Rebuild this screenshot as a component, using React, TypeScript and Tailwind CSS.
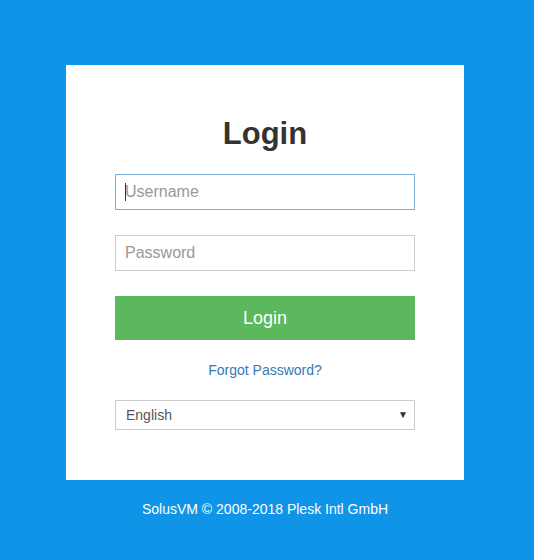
import React from 'react';

const font = { fontFamily: '"Liberation Sans", Arial, sans-serif' };

export default function App() {
  return (
    <div
      className="min-h-[560px] w-full bg-[#0f94e7] flex flex-col items-center pt-[65px] pr-[4px]"
      style={font}
    >
      <div className="w-[398px] bg-white px-[49px] pt-[51px] pb-[50px] flex flex-col">
        <h1 className="text-center text-[31px] leading-[36px] font-bold text-[#333]">
          Login
        </h1>

        <div className="relative mt-[22px]">
          <input
            type="text"
            placeholder="Username"
            className="w-full h-[36px] border border-[#7fb1d8] px-[9px] text-[16px] text-[#555] placeholder:text-[#999] outline-none"
          />
          <span className="absolute left-[10px] top-[9px] h-[18px] w-px bg-[#333]" />
        </div>

        <input
          type="password"
          placeholder="Password"
          className="mt-[25px] w-full h-[36px] border border-[#ccc] px-[9px] text-[16px] text-[#555] placeholder:text-[#999] outline-none"
        />

        <button className="mt-[25px] h-[44px] w-full bg-[#5cb85c] text-white text-[18px]">
          Login
        </button>

        <a className="mt-[20px] text-center text-[14px] leading-[20px] text-[#337ab7]">
          Forgot Password?
        </a>

        <div className="relative mt-[20px]">
          <select className="w-full h-[30px] appearance-none border border-[#ccc] bg-white pl-[10px] text-[14px] text-[#555] outline-none">
            <option>English</option>
          </select>
          <span className="pointer-events-none absolute right-[7px] top-[7px] text-[10px] text-[#333]">
            ▼
          </span>
        </div>
      </div>

      <p className="mt-[20px] text-[14px] leading-[18px] text-white">
        SolusVM © 2008-2018 Plesk Intl GmbH
      </p>
    </div>
  );
}
